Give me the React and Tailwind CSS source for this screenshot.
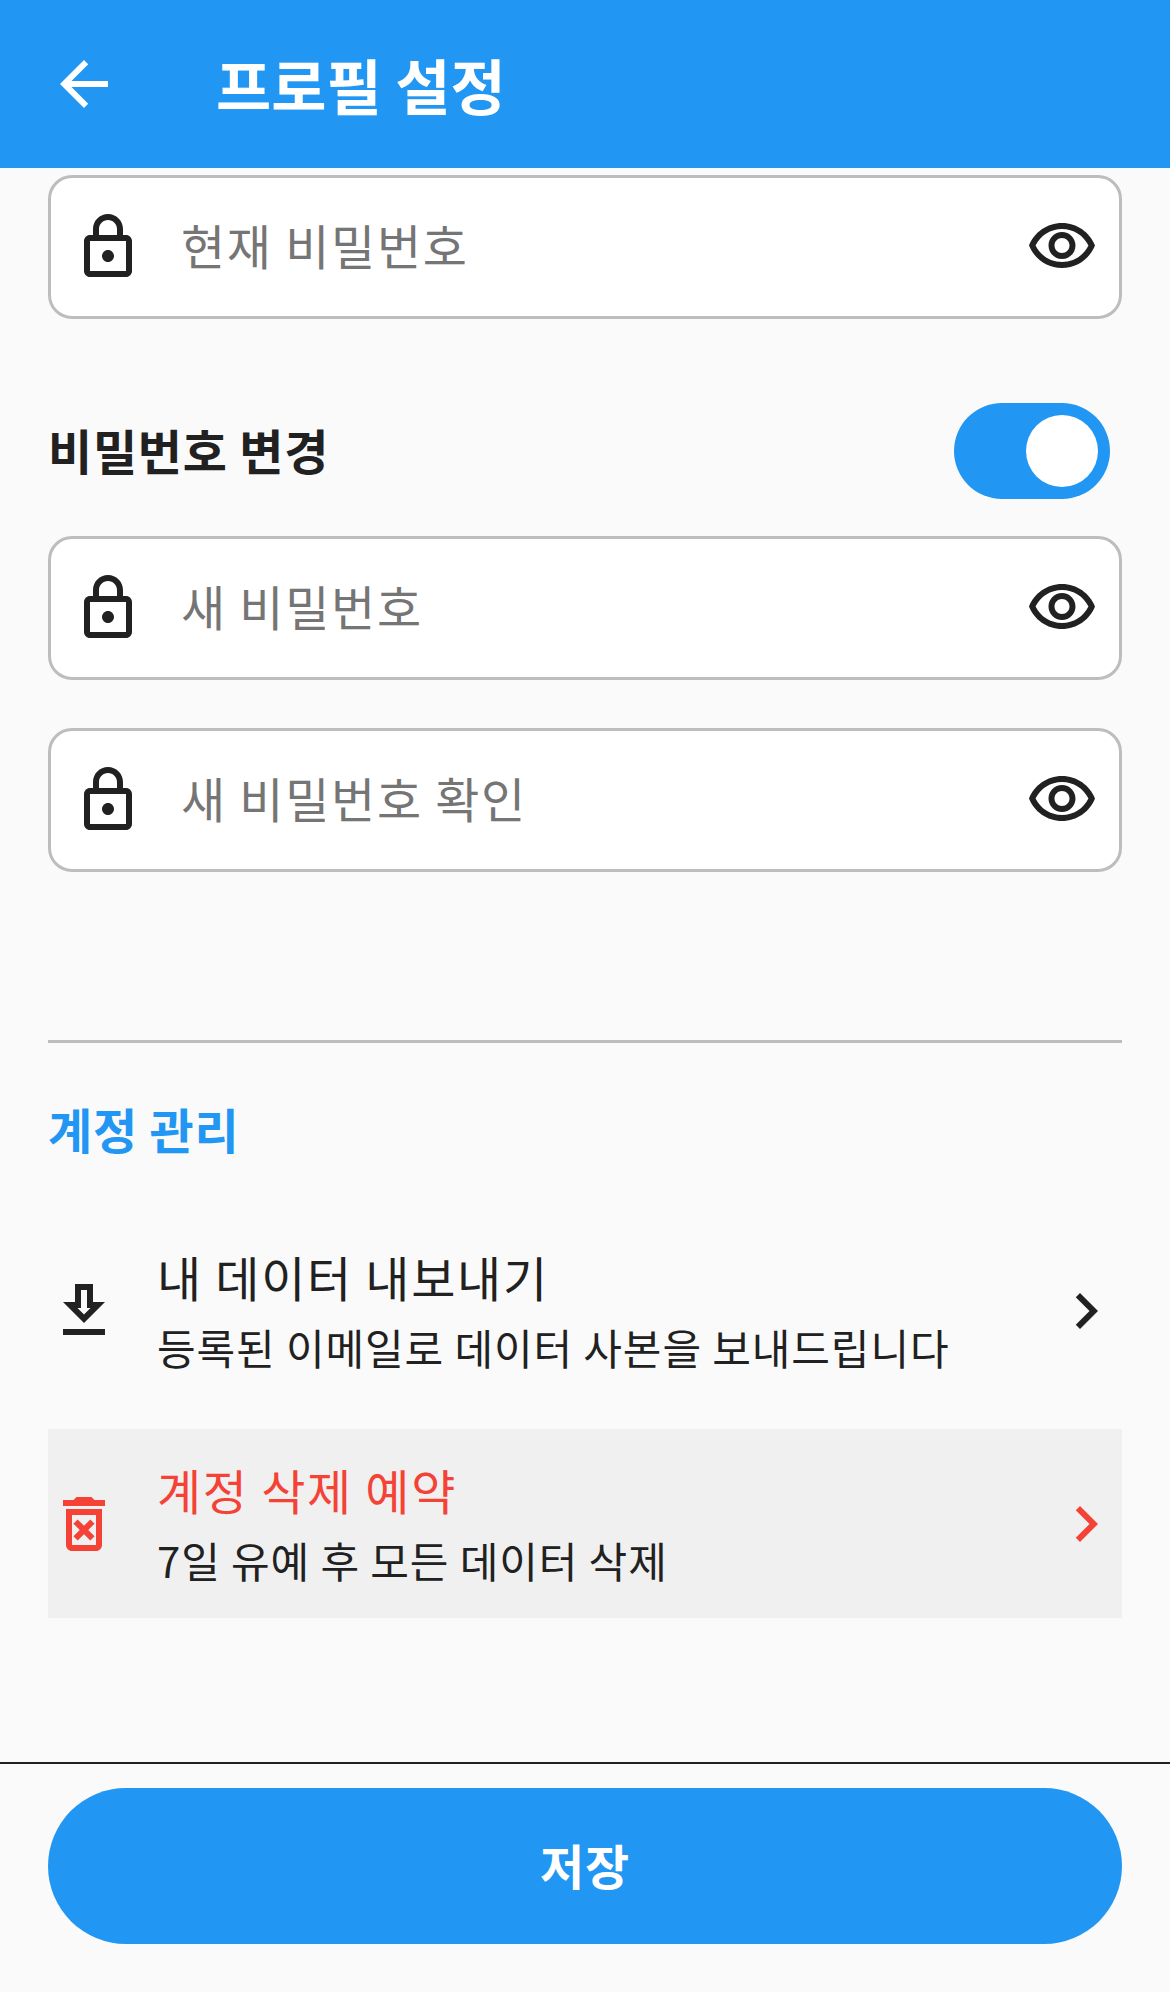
import React from "react";

const font = { fontFamily: '"Noto Sans CJK KR", "Noto Sans", sans-serif' };

// material icon paths, all on a 24 grid
const paths = {
  back: "M20 11H7.83l5.59-5.59L12 4l-8 8 8 8 1.41-1.41L7.83 13H20v-2z",
  lock: "M18 8h-1V6c0-2.76-2.24-5-5-5S7 3.24 7 6v2H6c-1.1 0-2 .9-2 2v10c0 1.1.9 2 2 2h12c1.1 0 2-.9 2-2V10c0-1.1-.9-2-2-2zM9 6c0-1.66 1.34-3 3-3s3 1.34 3 3v2H9V6zm9 14H6V10h12v10zm-6-3c1.1 0 2-.9 2-2s-.9-2-2-2-2 .9-2 2 .9 2 2 2z",
  eye: "M12 6c3.79 0 7.17 2.13 8.82 5.5C19.17 14.87 15.79 17 12 17s-7.17-2.13-8.82-5.5C4.83 8.13 8.21 6 12 6m0-2C7 4 2.73 7.11 1 11.5 2.73 15.89 7 19 12 19s9.27-3.11 11-7.5C21.27 7.11 17 4 12 4zm0 5c1.38 0 2.5 1.12 2.5 2.5S13.38 14 12 14s-2.5-1.12-2.5-2.5S10.62 9 12 9m0-2c-2.48 0-4.5 2.02-4.5 4.5S9.52 16 12 16s4.5-2.02 4.5-4.5S14.48 7 12 7z",
  download: "M19 9h-4V3H9v6H5l7 7 7-7zm-8 2V5h2v6h1.17L12 13.17 9.83 11H11zm-6 7h14v2H5z",
  trash: "M14.12 10.47L12 12.59l-2.13-2.12-1.41 1.41L10.59 14l-2.12 2.12 1.41 1.41L12 15.41l2.12 2.12 1.41-1.41L13.41 14l2.12-2.12zM15.5 4l-1-1h-5l-1 1H5v2h14V4zM6 19c0 1.1.9 2 2 2h8c1.1 0 2-.9 2-2V7H6v12zM8 9h8v10H8V9z",
  chevron: "M10 6L8.59 7.41 13.17 12l-4.58 4.59L10 18l6-6z",
};

function Icon({ name, color = "#212121" }) {
  return (
    <svg width="72" height="72" viewBox="0 0 24 24" className="shrink-0">
      <path d={paths[name]} fill={color} />
    </svg>
  );
}

function PasswordField({ placeholder }) {
  return (
    <div className="flex items-center h-[144px] rounded-[24px] border-[3px] border-[#bdbdbd] bg-white px-[21px]">
      <Icon name="lock" />
      <span className="ml-[37px] flex-1 pb-[6px] text-[48px] leading-none tracking-[1.7px] text-[#757575]">
        {placeholder}
      </span>
      <Icon name="eye" />
    </div>
  );
}

function ActionRow({ icon, iconColor, title, subtitle, titleColor, className }) {
  return (
    <div className={"flex items-center h-[189px] " + className}>
      <Icon name={icon} color={iconColor} />
      <div className="ml-[37px] flex-1 pb-[5px]">
        <p className={"text-[48px] leading-[72px] tracking-[1.7px] " + titleColor}>{title}</p>
        <p className="mt-[5px] text-[42px] leading-[60px] tracking-[0.9px] text-[#212121]">{subtitle}</p>
      </div>
      <Icon name="chevron" color={iconColor} />
    </div>
  );
}

export default function App() {
  return (
    <div className="flex flex-col h-[1992px] bg-[#fafafa]" style={font}>
      {/* Header */}
      <div className="flex items-center h-[168px] bg-[#2196f3] pl-[48px] shrink-0">
        <Icon name="back" color="#ffffff" />
        <h1 className="ml-[96px] text-[60px] font-bold text-white leading-none">
          프로필 설정
        </h1>
      </div>

      {/* Content */}
      <div className="flex-1 px-[48px] pt-[7px]">
        <PasswordField placeholder="현재 비밀번호" />

        <div className="flex items-center justify-between h-[96px] mt-[84px] pr-[12px]">
          <span className="pb-[5px] text-[48px] font-bold leading-none tracking-[0.75px] text-[#212121]">
            비밀번호 변경
          </span>
          <div className="flex items-center justify-end w-[156px] h-[96px] rounded-full bg-[#2196f3] pr-[12px]">
            <div className="w-[72px] h-[72px] rounded-full bg-white" />
          </div>
        </div>

        <div className="mt-[37px]">
          <PasswordField placeholder="새 비밀번호" />
        </div>
        <div className="mt-[48px]">
          <PasswordField placeholder="새 비밀번호 확인" />
        </div>

        <div className="h-[3px] bg-[#bdbdbd] mt-[168px]" />

        <h2 className="mt-[55px] text-[48px] font-bold leading-[60px] tracking-[0.75px] text-[#2196f3]">
          계정 관리
        </h2>

        <ActionRow
          className="mt-[58px]"
          icon="download"
          iconColor="#212121"
          title="내 데이터 내보내기"
          subtitle="등록된 이메일로 데이터 사본을 보내드립니다"
          titleColor="text-[#212121]"
        />
        <ActionRow
          className="mt-[24px] bg-[#f0f0f0]"
          icon="trash"
          iconColor="#f44336"
          title="계정 삭제 예약"
          subtitle="7일 유예 후 모든 데이터 삭제"
          titleColor="text-[#f44336]"
        />
      </div>

      {/* Footer */}
      <div className="shrink-0 h-[230px] border-t-[2px] border-[#212121] px-[48px] pt-[24px]">
        <button className="w-full h-[156px] rounded-full bg-[#2196f3] pb-[5px] text-[48px] font-bold tracking-[0.75px] text-white">
          저장
        </button>
      </div>
    </div>
  );
}
